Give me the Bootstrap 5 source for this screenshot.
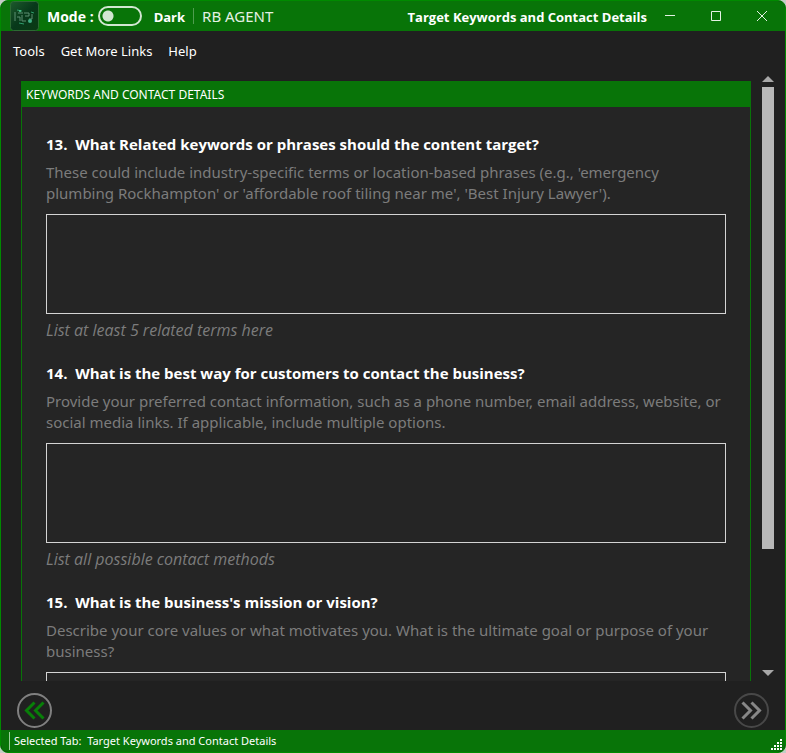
<!DOCTYPE html>
<html lang="en">
<head>
<meta charset="utf-8">
<meta name="viewport" content="width=device-width, initial-scale=1">
<title>RB AGENT - Target Keywords and Contact Details</title>
<link href="https://cdn.jsdelivr.net/npm/bootstrap@5.3.0/dist/css/bootstrap.min.css" rel="stylesheet">
<style>
  :root { --green: #087408; --edge: #008a00; --ink: #202020; --panel: #252525; --dim: #7c7c7c; --line: #d4d4d4; }
  body { background: #c4cdc6; font-family: "Segoe UI", "Noto Sans", "Open Sans", sans-serif; font-size: 13px; color: #fff; }
  .app-window { background: var(--ink); border: 1px solid var(--edge); border-radius: 8px; }
  .title-bar, .status-bar, .panel-title { background: var(--green); }
  .title-bar { height: 30px; font-size: 13px; line-height: 18px; }
  .app-icon { width: 30px; height: 30px; }
  .mode-label { font-family: "Open Sans", sans-serif; font-weight: 700; padding-top: 2px; }
  .mode-lead { font-size: 14px; }
  .mode-switch { appearance: none; width: 44px; height: 20px; margin: 0; border: 2px solid #d2e6d2; border-radius: 10px; background: radial-gradient(circle at 8px 8px, #d2e6d2 5px, transparent 6px); }
  .app-name { border-left: 1px solid #4f9d4f; font-size: 15px; line-height: 16px; color: #e4f1e4; }
  .win-btn { width: 46px; height: 30px; }
  .plain-btn { background: none; border: 0; padding: 0; display: flex; align-items: center; justify-content: center; }
  .menu-row { height: 42px; font-size: 13px; }
  .menu-row a { color: #fff; text-decoration: none; }
  .view { min-height: 0; }
  .sheet { min-height: 0; overflow-y: auto; scrollbar-width: none; margin: 8px 11px 0 20px; }
  .sheet::-webkit-scrollbar { display: none; }
  .panel-box { border: 1px solid var(--green); background: var(--panel); }
  .panel-title { height: 25px; font-size: 12px; line-height: 25px; font-weight: 400; }
  .questions { padding: 27px 24px 24px; font-size: 15px; line-height: 21px; }
  .question { margin-bottom: 22px; }
  .question label { font-family: "Open Sans", sans-serif; font-size: 15px; font-weight: 700; white-space: pre-wrap; }
  .about { color: var(--dim); margin: 7px 0 10px; }
  .answer { height: 100px; border: 1px solid var(--line); border-radius: 0; background: transparent; color: #fff; resize: none; }
  .answer:focus { background: transparent; color: #fff; }
  .hint { color: var(--dim); font-family: "Open Sans", sans-serif; font-size: 16px; font-style: italic; margin: 6px 0 0; }
  .scroll-rail { width: 12px; margin: 2px 11px 4px 0; }
  .thumb-track { padding: 4px 0; }
  .thumb { height: 80%; background: #b8b8b8; }
  .nav-row { height: 49px; padding: 12px 16px 0; }
  .status-bar { height: 22px; font-size: 11px; line-height: 18px; border-radius: 0 0 7px 7px; }
  .status-text { border-left: 1px solid #9bd09b; }
  .grip { margin-right: -6px; }
</style>
<script src="https://cdn.jsdelivr.net/npm/bootstrap@5.3.0/dist/js/bootstrap.bundle.min.js"></script>
</head>
<body>
<div class="app-window vh-100 d-flex flex-column overflow-hidden">
  <header class="title-bar d-flex align-items-center flex-shrink-0">
    <svg class="app-icon ms-2 flex-shrink-0" viewBox="0 0 30 30" aria-hidden="true">
      <defs><linearGradient id="tile" x1="0" y1="0" x2="1" y2="1"><stop offset="0" stop-color="#1d5a2c"/><stop offset=".5" stop-color="#07381a"/><stop offset="1" stop-color="#0a3a14"/></linearGradient></defs>
      <rect x="1.500" y=".5" width="28" height="29" rx="3" fill="url(#tile)" stroke="#2c6a33"/>
      <path d="M6 11v9M9 12h5M8 16h3v4M13 14v6h4M15 12h5v3h-4M20 18h3v-5" fill="none" stroke="#5c8f72"/>
      <path d="M8 9l5 1M10 22l5 1M22 11l3 1" stroke="#2f9c6c" fill="none"/>
      <circle cx="21" cy="20" r="2" fill="#3fae86"/><circle cx="11" cy="10" r="1" fill="#52c795"/>
    </svg>
    <label class="mode-label mode-lead ms-2 pe-1" for="mode">Mode :</label>
    <input class="mode-switch" type="checkbox" role="switch" id="mode">
    <label class="mode-label ms-2 ps-1" for="mode">Dark</label>
    <span class="app-name ms-2 ps-2">RB AGENT</span>
    <span class="mode-label ms-auto">Target Keywords and Contact Details</span>
    <button class="plain-btn win-btn" type="button" aria-label="Minimize"><svg width="10" height="10"><path d="M0 4.500h10" stroke="#e4f1e4"/></svg></button>
    <button class="plain-btn win-btn" type="button" aria-label="Maximize"><svg width="10" height="10"><path d="M.5.5h9v9h-9z" fill="none" stroke="#e4f1e4"/></svg></button>
    <button class="plain-btn win-btn" type="button" aria-label="Close"><svg width="10" height="10"><path d="M0 0l10 10M10 0L0 10" stroke="#e4f1e4"/></svg></button>
  </header>
  <nav class="menu-row d-flex align-items-center gap-3 px-2 ms-1 flex-shrink-0">
    <a href="#">Tools</a><a href="#">Get More Links</a><a href="#">Help</a>
  </nav>
  <main class="view d-flex flex-grow-1">
    <div class="sheet flex-grow-1">
      <section class="panel-box">
        <h1 class="panel-title m-0 px-1">KEYWORDS AND CONTACT DETAILS</h1>
        <form class="questions">
          <div class="question">
            <label class="d-block" for="q13">13.  What Related keywords or phrases should the content target?</label>
            <p class="about">These could include industry-specific terms or location-based phrases (e.g., 'emergency plumbing Rockhampton' or 'affordable roof tiling near me', 'Best Injury Lawyer').</p>
            <textarea class="form-control answer" id="q13"></textarea>
            <p class="hint">List at least 5 related terms here</p>
          </div>
          <div class="question">
            <label class="d-block" for="q14">14.  What is the best way for customers to contact the business?</label>
            <p class="about">Provide your preferred contact information, such as a phone number, email address, website, or social media links. If applicable, include multiple options.</p>
            <textarea class="form-control answer" id="q14"></textarea>
            <p class="hint">List all possible contact methods</p>
          </div>
          <div class="question">
            <label class="d-block" for="q15">15.  What is the business's mission or vision?</label>
            <p class="about">Describe your core values or what motivates you. What is the ultimate goal or purpose of your business?</p>
            <textarea class="form-control answer" id="q15"></textarea>
          </div>
        </form>
      </section>
    </div>
    <div class="scroll-rail d-flex flex-column flex-shrink-0">
      <button class="plain-btn" type="button" aria-label="Scroll up"><svg width="12" height="8"><path d="M0 7L6 1l6 6z" fill="#a8a8a8"/></svg></button>
      <div class="thumb-track flex-grow-1"><div class="thumb"></div></div>
      <button class="plain-btn" type="button" aria-label="Scroll down"><svg width="12" height="8"><path d="M0 1l6 6 6-6z" fill="#a8a8a8"/></svg></button>
    </div>
  </main>
  <div class="nav-row d-flex justify-content-between flex-shrink-0">
    <button class="plain-btn align-self-start" type="button" aria-label="Previous"><svg width="35" height="35"><circle cx="17.500" cy="17.500" r="16.500" fill="none" stroke="#808080" stroke-width="2"/><path d="M17.500 9.500L9.500 17.500l8 8M26.500 9.500l-8 8 8 8" fill="none" stroke="#087f08" stroke-width="3"/></svg></button>
    <button class="plain-btn align-self-start" type="button" aria-label="Next"><svg width="35" height="35"><circle cx="17.500" cy="17.500" r="16.500" fill="none" stroke="#484848" stroke-width="2"/><path d="M8.500 9.500l8 8-8 8M17.500 9.500l8 8-8 8" fill="none" stroke="#888" stroke-width="3"/></svg></button>
  </div>
  <footer class="status-bar d-flex align-items-center px-2 flex-shrink-0">
    <span class="status-text ps-1">Selected Tab:&nbsp; Target Keywords and Contact Details</span>
    <svg class="grip ms-auto align-self-end" width="12" height="13" aria-hidden="true"><path d="M9 0h2v2h-2zM9 3h2v2h-2zM6 3h2v2h-2zM9 6h2v2h-2zM6 6h2v2h-2zM3 6h2v2h-2zM9 9h2v2h-2zM6 9h2v2h-2zM3 9h2v2h-2zM0 9h2v2h-2z" fill="#fff"/></svg>
  </footer>
</div>
</body>
</html>
